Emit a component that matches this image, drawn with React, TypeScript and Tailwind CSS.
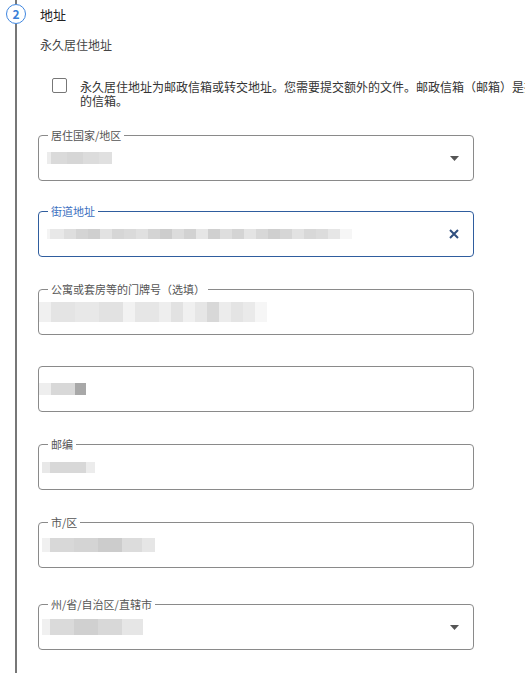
type Seg = [number, string];

const Blur = ({ segs, h, pl }: { segs: Seg[]; h: number; pl: number }) => (
  <div className="flex" style={{ height: h, marginLeft: pl }}>
    {segs.map(([w, c], i) => (
      <span key={i} style={{ width: w, background: c }} className="h-full" />
    ))}
  </div>
);

const Field = ({
  label,
  focused,
  icon,
  segs,
  h,
  pl,
}: {
  label?: string;
  focused?: boolean;
  icon?: "arrow" | "clear";
  segs: Seg[];
  h: number;
  pl: number;
}) => (
  <div
    className={`ml-[6px] w-[436px] h-[46px] rounded-[4px] border flex flex-col ${
      focused ? "border-[#2f5d9e]" : "border-[#8a8a8a]"
    }`}
  >
    {label && (
      <span
        className={`-mt-[8px] ml-[9px] w-fit bg-white px-[3px] text-[11px] leading-[14px] ${
          focused ? "text-[#3a6fc0]" : "text-[#555]"
        }`}
      >
        {label}
      </span>
    )}
    <div className={`flex-1 flex items-center justify-between pr-[14px] ${label ? "pb-[6px]" : ""}`}>
      <Blur segs={segs} h={h} pl={pl} />
      {icon === "arrow" && (
        <svg width="9" height="5" viewBox="0 0 9 5">
          <path d="M0 0h9L4.5 5z" fill="#555" />
        </svg>
      )}
      {icon === "clear" && (
        <svg width="10" height="10" viewBox="0 0 10 10">
          <path d="M1 1l8 8M9 1L1 9" stroke="#2f4f7f" strokeWidth="2" />
        </svg>
      )}
    </div>
  </div>
);

export default function App() {
  const street: Seg[] = [
    [3, "#f4f4f4"], [14, "#e8e8e8"], [12, "#dedede"], [12, "#d4d4d4"], [12, "#cfcfcf"],
    [12, "#e2e2e2"], [12, "#d6d6d6"], [12, "#dadada"], [12, "#e0e0e0"], [12, "#d4d4d4"],
    [12, "#cdcdcd"], [12, "#dcdcdc"], [12, "#d2d2d2"], [12, "#e6e6e6"], [12, "#d0d0d0"],
    [12, "#dedede"], [12, "#d4d4d4"], [12, "#e4e4e4"], [12, "#d8d8d8"], [12, "#cfcfcf"],
    [12, "#d6d6d6"], [12, "#e2e2e2"], [12, "#d8d8d8"], [12, "#dcdcdc"], [12, "#e6e6e6"],
    [12, "#f6f6f6"],
  ];
  return (
    <div className="w-[525px] h-[673px] overflow-hidden bg-white flex font-['Noto_Sans_CJK_SC',sans-serif] text-[#333]">
      <div className="w-[32px] flex flex-col items-center shrink-0">
        <div className="w-[2px] h-[4px] bg-[#777]" />
        <div className="w-[20px] h-[20px] rounded-full border-[1.5px] border-[#3f86df] flex items-center justify-center text-[12px] font-bold text-[#3b7fd8] leading-none">
          2
        </div>
        <div className="w-[2px] flex-1 bg-[#777]" />
      </div>
      <div className="flex flex-col">
        <div className="pl-[8px] pt-[6px] text-[13px] leading-[18px] text-[#222]">地址</div>
        <div className="pl-[8px] mt-[12px] text-[12px] leading-[18px] text-[#444]">永久居住地址</div>
        <div className="flex items-start mt-[26px] pl-[20px]">
          <div className="w-[15px] h-[15px] -mt-[2px] rounded-[2px] border border-[#777] shrink-0" />
          <p className="ml-[13px] w-[545px] shrink-0 text-[12px] leading-[14px] text-[#333]">
            永久居住地址为邮政信箱或转交地址。您需要提交额外的文件。邮政信箱（邮箱）是指位于邮局内上锁的信箱。
          </p>
        </div>
        <div className="flex flex-col mt-[27px]">
          <Field
            label="居住国家/地区"
            icon="arrow"
            h={12}
            pl={8}
            segs={[[4, "#ececec"], [16, "#dadada"], [16, "#d6d6d6"], [16, "#dcdcdc"], [13, "#e0e0e0"]]}
          />
          <div className="h-[30px]" />
          <Field label="街道地址" focused icon="clear" h={10} pl={8} segs={street} />
          <div className="h-[32px]" />
          <Field
            label="公寓或套房等的门牌号（选填）"
            h={20}
            pl={0}
            segs={[
              [12, "#f0f0f0"], [24, "#e4e4e4"], [24, "#e8e8e8"], [24, "#e2e2e2"], [12, "#f2f2f2"],
              [24, "#e6e6e6"], [12, "#eeeeee"], [12, "#e2e2e2"], [12, "#f0f0f0"], [12, "#e6e6e6"],
              [12, "#d8d8d8"], [12, "#ececec"], [12, "#e4e4e4"], [12, "#eaeaea"], [12, "#f6f6f6"],
            ]}
          />
          <div className="h-[31px]" />
          <Field h={12} pl={0} segs={[[12, "#eeeeee"], [24, "#d8d8d8"], [11, "#a8a8a8"]]} />
          <div className="h-[32px]" />
          <Field label="邮编" h={11} pl={3} segs={[[8, "#e8e8e8"], [36, "#d8d8d8"], [9, "#ececec"]]} />
          <div className="h-[32px]" />
          <Field
            label="市/区"
            h={14}
            pl={3}
            segs={[[8, "#f0f0f0"], [24, "#d8d8d8"], [24, "#d4d4d4"], [24, "#cccccc"], [20, "#dcdcdc"], [13, "#e6e6e6"]]}
          />
          <div className="h-[36px]" />
          <Field
            label="州/省/自治区/直辖市"
            icon="arrow"
            h={16}
            pl={3}
            segs={[[8, "#f0f0f0"], [24, "#dadada"], [24, "#d0d0d0"], [24, "#d8d8d8"], [21, "#e6e6e6"]]}
          />
        </div>
      </div>
    </div>
  );
}
